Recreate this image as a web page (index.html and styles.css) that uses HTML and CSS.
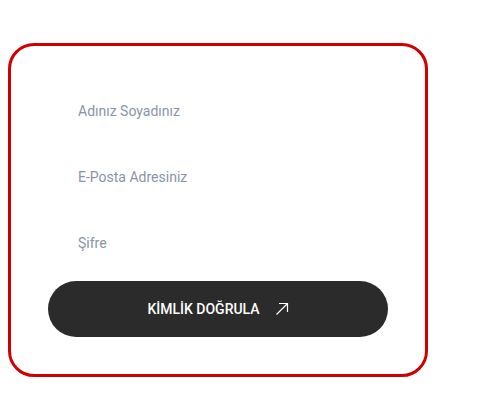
FILE: index.html
```html
<!DOCTYPE html>
<html lang="tr">
<head>
<meta charset="utf-8">
<link rel="stylesheet" href="styles.css">
</head>
<body>
<form class="card">
  <input class="field" type="text" placeholder="Adınız Soyadınız">
  <input class="field" type="email" placeholder="E-Posta Adresiniz">
  <input class="field" type="password" placeholder="Şifre">
  <button class="btn" type="button">
    <span>KİMLİK DOĞRULA</span>
    <svg class="arrow" width="14" height="14" viewBox="0 0 14 14" fill="none" stroke="#fff" stroke-width="1.2">
      <path d="M1.5 12.5 L12.5 1.5 M4 1.5 H12.5 V10"/>
    </svg>
  </button>
</form>
</body>
</html>
```
FILE: styles.css
```css
* { box-sizing: border-box; }
body {
  margin: 0;
  background: #fff;
  font-family: Roboto, "Liberation Sans", sans-serif;
}
.card {
  width: 420px;
  margin: 43px 0 0 8px;
  border: 3px solid #d00000;
  border-radius: 26px;
  padding: 37px;
  display: flex;
  flex-direction: column;
  gap: 10px;
  background: #fff;
}
.field {
  height: 56px;
  border: none;
  outline: none;
  background: transparent;
  padding: 0 30px;
  font-family: inherit;
  font-size: 14px;
  color: #333;
}
.field::placeholder { color: #8a94a6; }
.btn {
  height: 56px;
  border: none;
  border-radius: 28px;
  background: #2b2b2b;
  color: #fff;
  font-family: inherit;
  font-size: 14px;
  font-weight: 500;
  display: flex;
  align-items: center;
  justify-content: center;
  gap: 15px;
  cursor: pointer;
}
.arrow { display: block; }
```
